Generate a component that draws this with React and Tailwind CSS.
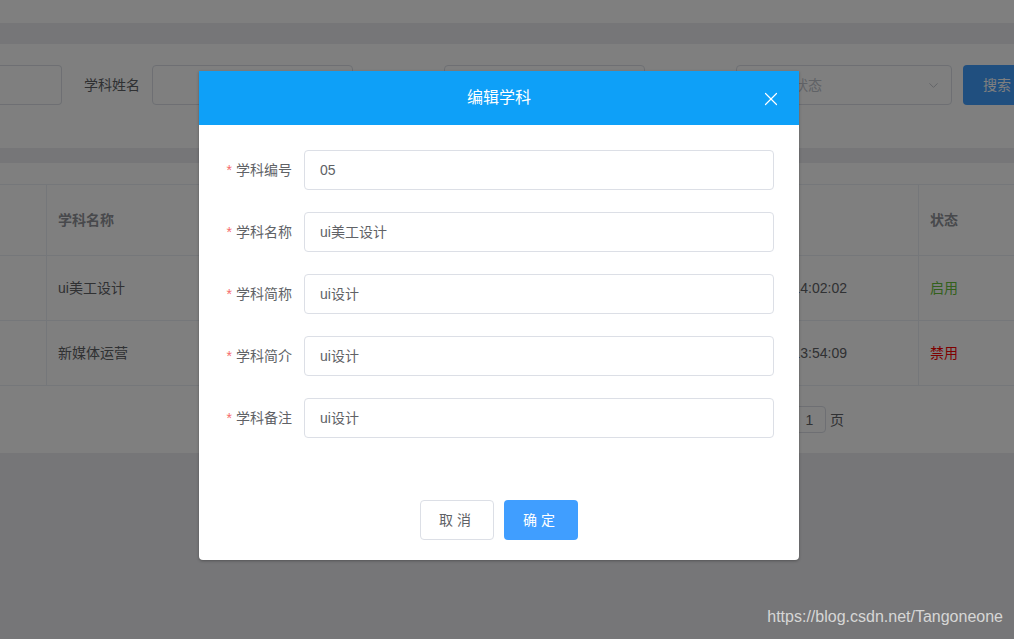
import { X, ChevronDown } from "lucide-react";

const fields = [
  { label: "学科编号", value: "05" },
  { label: "学科名称", value: "ui美工设计" },
  { label: "学科简称", value: "ui设计" },
  { label: "学科简介", value: "ui设计" },
  { label: "学科备注", value: "ui设计" },
];

const font = { fontFamily: '"Liberation Sans", "Noto Sans CJK SC", sans-serif' };

function Page() {
  return (
    <div className="w-[1014px] h-[639px] overflow-hidden bg-[#ecedf0]">
      <div className="h-[23px] bg-white" />
      <div className="h-[21px]" />
      {/* search card */}
      <div className="h-[104px] bg-white flex items-start pt-[21px] text-sm text-[#606266]">
        <div className="shrink-0 w-[62px] h-10 border border-l-0 border-[#dcdfe6] rounded-r" />
        <div className="shrink-0 w-[90px] h-10 flex items-center pl-[22px]">学科姓名</div>
        <div className="shrink-0 w-[201px] h-10 border border-[#dcdfe6] rounded" />
        <div className="shrink-0 w-[91px] h-10 flex items-center pl-[22px]">学科简称</div>
        <div className="shrink-0 w-[201px] h-10 border border-[#dcdfe6] rounded" />
        <div className="shrink-0 w-[91px] h-10 flex items-center pl-[22px]">学科状态</div>
        <div className="shrink-0 w-[216px] h-10 border border-[#dcdfe6] rounded flex items-center justify-between pl-[15px] pr-[10px] text-[#c0c4cc]">
          <span>请选择状态</span>
          <ChevronDown size={15} strokeWidth={1.5} />
        </div>
        <div className="shrink-0 ml-[11px] w-[70px] h-10 bg-[#409eff] rounded-l text-white flex items-center pl-[20px]">搜索</div>
      </div>
      <div className="h-[15px]" />
      {/* table card */}
      <div className="h-[290px] bg-white pt-[21px] text-sm">
        <div className="border-t border-[#ebeef5]">
          <div className="flex h-[71px] border-b border-[#ebeef5] text-[#909399] font-bold">
            <div className="w-[47px] border-r border-[#ebeef5]" />
            <div className="w-[872px] border-r border-[#ebeef5] flex items-center pl-[11px]">学科名称</div>
            <div className="flex-1 flex items-center pl-[11px]">状态</div>
          </div>
          <div className="flex h-[65px] border-b border-[#ebeef5] text-[#606266]">
            <div className="w-[47px] border-r border-[#ebeef5]" />
            <div className="w-[872px] border-r border-[#ebeef5] flex items-center justify-between pl-[11px] pr-[71px]">
              <span>ui美工设计</span>
              <span>2020-06-22 14:02:02</span>
            </div>
            <div className="flex-1 flex items-center pl-[11px] text-[#67c23a]">启用</div>
          </div>
          <div className="flex h-[65px] border-b border-[#ebeef5] text-[#606266]">
            <div className="w-[47px] border-r border-[#ebeef5]" />
            <div className="w-[872px] border-r border-[#ebeef5] flex items-center justify-between pl-[11px] pr-[71px]">
              <span>新媒体运营</span>
              <span>2020-06-22 13:54:09</span>
            </div>
            <div className="flex-1 flex items-center pl-[11px] text-[#ff0000]">禁用</div>
          </div>
          <div className="flex items-center h-[67px] text-[#606266] pl-[757px]">
            <span className="shrink-0 w-[28px] mr-[8px]">前往</span>
            <div className="shrink-0 w-[33px] h-[27px] border border-[#dcdfe6] rounded flex items-center justify-center">1</div>
            <span className="ml-[4px]">页</span>
          </div>
        </div>
      </div>
    </div>
  );
}

export default function App() {
  return (
    <div className="relative w-[1014px] h-[639px] overflow-hidden" style={font}>
      <Page />
      <div className="absolute inset-0 bg-black/50" />
      <div className="absolute left-[199px] top-[71px] w-[600px] h-[489px] bg-white rounded-b-sm shadow-[0_1px_3px_rgba(0,0,0,0.3)] flex flex-col">
        <div className="h-[54px] bg-[#0ea0f8] relative flex items-center justify-center text-white text-base">
          编辑学科
          <X size={22} strokeWidth={1.3} className="absolute right-[17px] top-[17px] text-white" />
        </div>
        <div className="flex flex-col gap-[22px] pt-[25px] pr-[25px]">
          {fields.map((f) => (
            <div key={f.label} className="flex items-center h-10">
              <div className="w-[105px] pr-[12px] text-right text-sm text-[#606266]">
                <span className="text-[#f56c6c] mr-[4px]">*</span>
                {f.label}
              </div>
              <div className="flex-1 h-10 border border-[#dcdfe6] rounded flex items-center px-[15px] text-sm text-[#606266]">
                {f.value}
              </div>
            </div>
          ))}
        </div>
        <div className="flex justify-center gap-[10px] mt-[62px]">
          <button className="w-[74px] h-10 border border-[#dcdfe6] rounded text-sm text-[#606266] tracking-[4px] bg-white">取消</button>
          <button className="w-[74px] h-10 rounded text-sm text-white tracking-[4px] bg-[#409eff]">确定</button>
        </div>
      </div>
      <div className="absolute right-[11px] bottom-[10px] text-[16px] text-[#d6d6d6]" style={{ fontFamily: '"Liberation Sans", Arial, sans-serif' }}>
        https://blog.csdn.net/Tangoneone
      </div>
    </div>
  );
}
